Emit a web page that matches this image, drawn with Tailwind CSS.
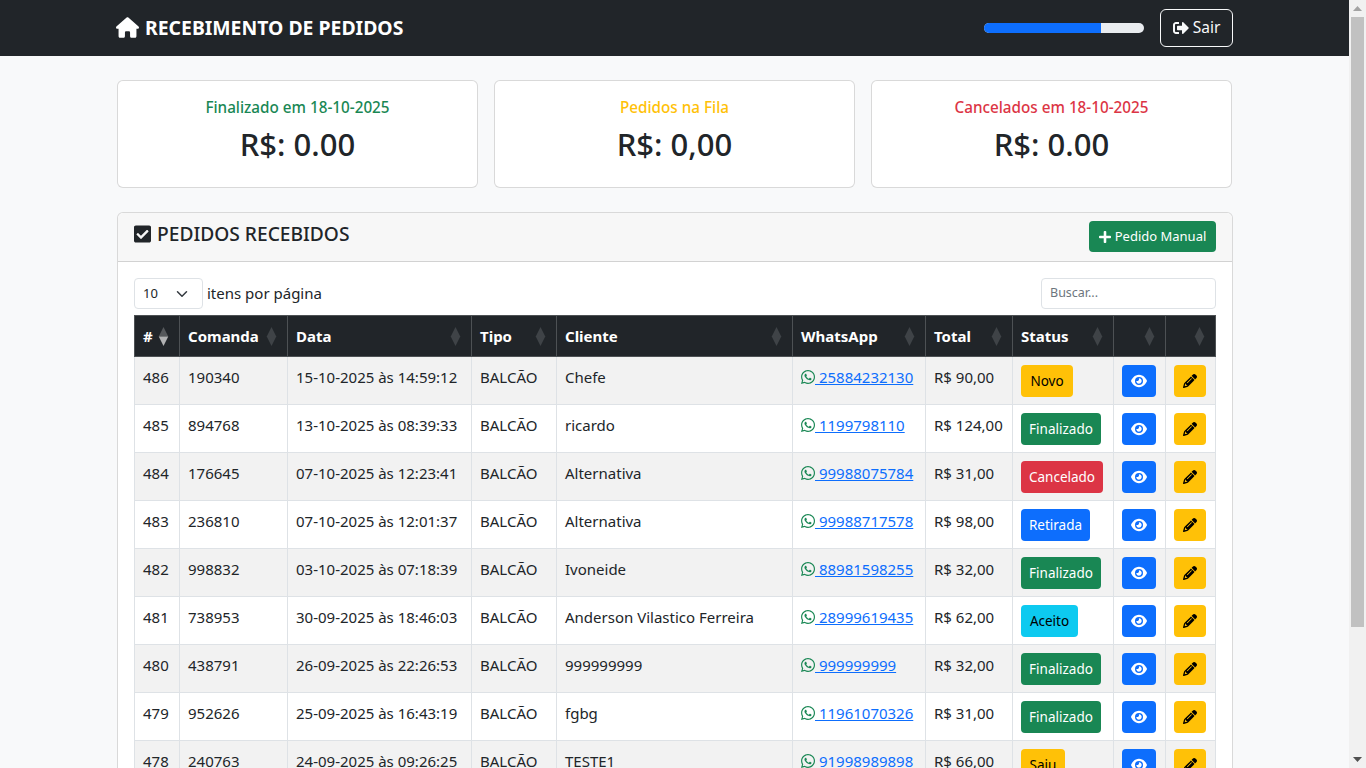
<!DOCTYPE html>
<html lang="pt-BR">
<head>
  <meta charset="UTF-8" />
  <meta name="viewport" content="width=device-width, initial-scale=1.0"/>
  <title>Recebimento de Pedidos</title>
  <script src="https://cdn.jsdelivr.net/npm/@tailwindcss/browser@4"></script>
</head>
<body class="h-screen overflow-hidden flex bg-[#f8f9fa] text-[#212529] font-['Noto_Sans',sans-serif]">

  <!-- icon sprites -->
  <svg class="hidden">
    <symbol id="i-home" viewBox="0 0 576 512"><path fill="currentColor" d="M575.8 255.5c0 18-15 32.1-32 32.1h-32l.7 160.2c0 2.7-.2 5.4-.5 8.1V472c0 22.1-17.9 40-40 40H456c-1.1 0-2.2 0-3.3-.1c-1.4 .1-2.8 .1-4.2 .1H416 392c-22.1 0-40-17.9-40-40V448 384c0-17.7-14.3-32-32-32H256c-17.7 0-32 14.3-32 32v64 24c0 22.1-17.9 40-40 40H160 128.1c-1.5 0-3-.1-4.5-.2c-1.2 .1-2.4 .2-3.6 .2H104c-22.1 0-40-17.9-40-40V360c0-.9 0-1.9 .1-2.8V287.6H32c-18 0-32-14-32-32.1c0-9 3-17 10-24L266.4 8c7-7 15-8 22-8s15 2 21 7L564.8 231.5c8 7 12 15 11 24z"/></symbol>
    <symbol id="i-check" viewBox="0 0 448 512"><path fill="currentColor" d="M400 480H48c-26.51 0-48-21.49-48-48V80c0-26.51 21.49-48 48-48h352c26.51 0 48 21.49 48 48v352c0 26.51-21.49 48-48 48zm-204.686-98.059l184-184c6.248-6.248 6.248-16.379 0-22.627l-22.627-22.627c-6.248-6.248-16.379-6.249-22.628 0L184 302.745l-69.059-69.059c-6.248-6.248-16.379-6.248-22.628 0L69.687 256.313c-6.248 6.248-6.248 16.379 0 22.627l104 104c6.249 6.25 16.379 6.25 22.627.001z"/></symbol>
    <symbol id="i-exit" viewBox="0 0 512 512"><path fill="currentColor" d="M497 273L329 441c-15 15-41 4.5-41-17v-96H152c-13.3 0-24-10.7-24-24v-96c0-13.3 10.7-24 24-24h136V88c0-21.4 25.9-32 41-17l168 168c9.3 9.4 9.3 24.6 0 34zM192 436v-40c0-6.6-5.4-12-12-12H96c-17.7 0-32-14.3-32-32V160c0-17.7 14.3-32 32-32h84c6.6 0 12-5.4 12-12V76c0-6.6-5.4-12-12-12H96c-53 0-96 43-96 96v192c0 53 43 96 96 96h84c6.6 0 12-5.4 12-12z"/></symbol>
    <symbol id="i-plus" viewBox="0 0 448 512"><path fill="currentColor" d="M416 208H272V64c0-17.67-14.33-32-32-32h-32c-17.67 0-32 14.33-32 32v144H32c-17.67 0-32 14.33-32 32v32c0 17.67 14.33 32 32 32h144v144c0 17.67 14.33 32 32 32h32c17.67 0 32-14.33 32-32V304h144c17.67 0 32-14.33 32-32v-32c0-17.67-14.33-32-32-32z"/></symbol>
    <symbol id="i-wa" viewBox="0 0 448 512"><path fill="currentColor" d="M380.9 97.1C339 55.1 283.2 32 223.9 32c-122.4 0-222 99.6-222 222 0 39.1 10.2 77.3 29.6 111L0 480l117.7-30.9c32.4 17.7 68.9 27 106.1 27h.1c122.3 0 224.1-99.6 224.1-222 0-59.3-25.2-115-67.1-157zm-157 341.6c-33.2 0-65.7-8.9-94-25.7l-6.7-4-69.8 18.3L72 359.2l-4.4-7c-18.5-29.4-28.2-63.3-28.2-98.2 0-101.7 82.8-184.5 184.6-184.5 49.3 0 95.6 19.2 130.4 54.1 34.8 34.9 56.2 81.2 56.1 130.5 0 101.8-84.9 184.6-186.6 184.6zm101.2-138.2c-5.5-2.8-32.8-16.2-37.9-18-5.1-1.9-8.8-2.8-12.5 2.8-3.7 5.6-14.3 18-17.6 21.8-3.2 3.7-6.5 4.2-12 1.4-32.6-16.3-54-29.1-75.5-66-5.7-9.8 5.7-9.1 16.3-30.3 1.8-3.7.9-6.9-.5-9.7-1.4-2.8-12.5-30.1-17.1-41.2-4.5-10.8-9.1-9.3-12.5-9.5-3.2-.2-6.9-.2-10.6-.2-3.7 0-9.7 1.4-14.8 6.9-5.1 5.6-19.4 19-19.4 46.3 0 27.3 19.9 53.7 22.6 57.4 2.8 3.7 39.1 59.7 94.8 83.8 35.2 15.2 49 16.5 66.6 13.9 10.7-1.6 32.8-13.4 37.4-26.4 4.6-13 4.6-24.1 3.2-26.4-1.3-2.5-5-3.9-10.5-6.6z"/></symbol>
    <symbol id="i-eye" viewBox="0 0 576 512"><path fill="currentColor" d="M288 32c-80.8 0-145.5 36.8-192.6 80.6C48.6 156 17.3 208 2.5 243.7c-3.3 7.9-3.3 16.7 0 24.6C17.3 304 48.6 356 95.4 399.4C142.5 443.2 207.2 480 288 480s145.5-36.8 192.6-80.6c46.8-43.5 78.1-95.4 93-131.1c3.3-7.9 3.3-16.7 0-24.6c-14.9-35.7-46.2-87.7-93-131.1C433.5 68.8 368.8 32 288 32zM144 256a144 144 0 1 1 288 0 144 144 0 1 1 -288 0zm144-64c0 35.3-28.7 64-64 64c-7.1 0-13.9-1.2-20.3-3.3c-5.5-1.8-11.9 1.6-11.7 7.4c.3 6.9 1.3 13.8 3.2 20.7c13.7 51.2 66.4 81.6 117.6 67.9s81.6-66.4 67.9-117.6c-11.1-41.5-47.8-69.4-88.6-71.1c-5.8-.2-9.2 6.1-7.4 11.7c2.1 6.4 3.3 13.2 3.3 20.3z"/></symbol>
    <symbol id="i-pen" viewBox="0 0 512 512"><path fill="currentColor" d="M410.3 231l11.3-11.3-33.9-33.9-62.1-62.1L291.7 89.8l-11.3 11.3-22.6 22.6L58.6 322.9c-10.4 10.4-18 23.3-22.2 37.4L1 480.7c-2.5 8.4-.2 17.5 6.1 23.7s15.3 8.5 23.7 6.1l120.3-35.4c14.1-4.2 27-11.8 37.4-22.2L387.7 253.7 410.3 231zM160 399.4l-9.1 22.7c-4 3.1-8.5 5.4-13.3 6.9L59.4 452l23-78.1c1.4-4.9 3.8-9.4 6.9-13.3l22.7-9.1v32c0 8.8 7.2 16 16 16h32zM362.7 18.7L348.3 33.2 325.7 55.8 314.3 67.1l33.9 33.9 62.1 62.1 33.9 33.9 11.3-11.3 22.6-22.6 14.5-14.5c25-25 25-65.5 0-90.5L453.3 18.7c-25-25-65.5-25-90.5 0zm-47.4 168l-144 144c-6.2 6.2-16.4 6.2-22.6 0s-6.2-16.4 0-22.6l144-144c6.2-6.2 16.4-6.2 22.6 0s6.2 16.4 0 22.6z"/></symbol>
    <symbol id="i-sort" viewBox="0 0 10 20"><path fill="currentColor" d="M5 0L10 10L5 20L0 10z"/></symbol>
    <symbol id="i-sort-desc" viewBox="0 0 10 20"><path fill="#55585b" d="M5 0L10 10H0z"/><path fill="#b0b1b2" d="M5 20L0 10H10z"/></symbol>
  </svg>

  <div class="w-[1349px] shrink-0 h-full overflow-hidden">
    <!-- Navbar -->
    <nav class="h-14 bg-[#212529] flex items-center justify-between pl-[116px] pr-[116px]">
      <a class="flex items-center gap-[6px] text-white text-[19.4px] font-bold">
        <svg class="w-[23px] h-[21px]"><use href="#i-home"/></svg>
        RECEBIMENTO DE PEDIDOS
      </a>
      <div class="flex items-center gap-4">
        <div class="w-40 h-2.5 rounded-full bg-[#e9ecef] overflow-hidden">
          <div class="h-full w-[73%] bg-[#0d6efd]"></div>
        </div>
        <button class="h-[38px] w-[73px] flex items-center justify-center gap-1 border border-[#f8f9fa] rounded-md text-[#f8f9fa] text-[15.5px]">
          <svg class="w-4 h-4"><use href="#i-exit"/></svg>
          Sair
        </button>
      </div>
    </nav>

    <main class="pl-[117px] pr-[116px] pt-6">
      <!-- Totals -->
      <div class="grid grid-cols-3 gap-4 mb-6 pr-px">
        <div class="h-[108px] bg-white border border-black/15 rounded-md flex flex-col items-center pt-[14px]">
          <h5 class="text-[15.25px] font-medium text-[#198754] leading-6">Finalizado em 18-10-2025</h5>
          <p class="text-[31px] font-medium leading-[38px] mt-[6px]">R$: 0.00</p>
        </div>
        <div class="h-[108px] bg-white border border-black/15 rounded-md flex flex-col items-center pt-[14px]">
          <h5 class="text-[15.25px] font-medium text-[#ffc107] leading-6">Pedidos na Fila</h5>
          <p class="text-[31px] font-medium leading-[38px] mt-[6px]">R$: 0,00</p>
        </div>
        <div class="h-[108px] bg-white border border-black/15 rounded-md flex flex-col items-center pt-[14px]">
          <h5 class="text-[15.25px] font-medium text-[#dc3545] leading-6">Cancelados em 18-10-2025</h5>
          <p class="text-[31px] font-medium leading-[38px] mt-[6px]">R$: 0.00</p>
        </div>
      </div>

      <!-- Pedidos -->
      <section class="bg-white border border-black/15 rounded-md">
        <header class="h-[49px] bg-[#f7f7f7] border-b border-black/15 rounded-t-md flex items-start justify-between px-4 pt-2">
          <h5 class="flex items-center gap-[6px] text-[19.2px] font-medium leading-[26px]">
            <svg class="w-[17px] h-5"><use href="#i-check"/></svg>
            PEDIDOS RECEBIDOS
          </h5>
          <button class="h-[31px] w-[127px] flex items-center justify-center gap-1 bg-[#198754] text-white text-[13px] rounded">
            <svg class="w-3 h-3.5"><use href="#i-plus"/></svg>
            Pedido Manual
          </button>
        </header>

        <div class="px-4 pt-4">
          <div class="flex items-center justify-between h-[31px] mb-[6px]">
            <div class="flex items-center gap-1 text-[15px]">
              <div class="w-[69px] h-[31px] border border-[#dee2e6] rounded flex items-center justify-between pl-2 pr-[14px] text-[13px] text-[#212529]">
                10
                <svg class="w-3 h-3" viewBox="0 0 16 16" fill="none" stroke="#343a40" stroke-width="2" stroke-linecap="round" stroke-linejoin="round"><path d="M2 5l6 6 6-6"/></svg>
              </div>
              itens por página
            </div>
            <div class="w-[175px] h-[31px] border border-[#dee2e6] rounded flex items-center px-2 text-[12.5px] text-[#6c757d]">Buscar...</div>
          </div>

          <table class="w-[1081px] table-fixed border-collapse text-[15px]">
            <colgroup>
              <col class="w-[45px]"><col class="w-[108px]"><col class="w-[184px]"><col class="w-[85px]"><col class="w-[236px]"><col class="w-[133px]"><col class="w-[87px]"><col class="w-[101px]"><col class="w-[52px]"><col class="w-[50px]">
            </colgroup>
            <thead class="bg-[#212529] text-white font-bold">
              <tr class="h-[41px]">
                <th class="border border-[#4d5154] pl-2 pr-[10px] text-left"><div class="flex items-center justify-between"># <svg class="w-[11px] h-[19px]"><use href="#i-sort-desc"/></svg></div></th>
                <th class="border border-[#4d5154] pl-2 pr-[10px] text-left"><div class="flex items-center justify-between">Comanda <svg class="w-[11px] h-[19px] text-[#3f4347]"><use href="#i-sort"/></svg></div></th>
                <th class="border border-[#4d5154] pl-2 pr-[10px] text-left"><div class="flex items-center justify-between">Data <svg class="w-[11px] h-[19px] text-[#3f4347]"><use href="#i-sort"/></svg></div></th>
                <th class="border border-[#4d5154] pl-2 pr-[10px] text-left"><div class="flex items-center justify-between">Tipo <svg class="w-[11px] h-[19px] text-[#3f4347]"><use href="#i-sort"/></svg></div></th>
                <th class="border border-[#4d5154] pl-2 pr-[10px] text-left"><div class="flex items-center justify-between">Cliente <svg class="w-[11px] h-[19px] text-[#3f4347]"><use href="#i-sort"/></svg></div></th>
                <th class="border border-[#4d5154] pl-2 pr-[10px] text-left"><div class="flex items-center justify-between">WhatsApp <svg class="w-[11px] h-[19px] text-[#3f4347]"><use href="#i-sort"/></svg></div></th>
                <th class="border border-[#4d5154] pl-2 pr-[10px] text-left"><div class="flex items-center justify-between">Total <svg class="w-[11px] h-[19px] text-[#3f4347]"><use href="#i-sort"/></svg></div></th>
                <th class="border border-[#4d5154] pl-2 pr-[10px] text-left"><div class="flex items-center justify-between">Status <svg class="w-[11px] h-[19px] text-[#3f4347]"><use href="#i-sort"/></svg></div></th>
                <th class="border border-[#4d5154] pl-2 pr-[10px] text-left"><div class="flex items-center justify-end"><svg class="w-[11px] h-[19px] text-[#3f4347]"><use href="#i-sort"/></svg></div></th>
                <th class="border border-[#4d5154] pl-2 pr-[10px] text-left"><div class="flex items-center justify-end"><svg class="w-[11px] h-[19px] text-[#3f4347]"><use href="#i-sort"/></svg></div></th>
              </tr>
            </thead>
            <tbody class="[&_td]:border [&_td]:border-[#dee2e6] [&_td]:px-2 [&_td]:pt-2 [&_td]:align-top [&_td]:leading-6 [&_td]:whitespace-nowrap [&_tr]:h-12 [&_a]:text-[#0d6efd] [&_a]:underline">
              <tr class="bg-[#f2f2f2]">
                <td>486</td><td>190340</td><td>15-10-2025 às 14:59:12</td><td>BALCÃO</td><td>Chefe</td>
                <td><a href="#"><svg class="inline-block w-3.5 h-4 text-[#198754] align-[-2px]"><use href="#i-wa"/></svg> 25884232130</a></td><td>R$ 90,00</td>
                <td><button class="h-8 w-[52px] rounded bg-[#ffc107] text-black text-[13.5px]">Novo</button></td>
                <td><button class="h-8 w-[34px] rounded bg-[#0d6efd] text-white flex items-center justify-center"><svg class="w-4 h-4"><use href="#i-eye"/></svg></button></td>
                <td><button class="h-8 w-8 rounded bg-[#ffc107] text-black flex items-center justify-center"><svg class="w-3.5 h-3.5"><use href="#i-pen"/></svg></button></td>
              </tr>
              <tr class="bg-white">
                <td>485</td><td>894768</td><td>13-10-2025 às 08:39:33</td><td>BALCÃO</td><td>ricardo</td>
                <td><a href="#"><svg class="inline-block w-3.5 h-4 text-[#198754] align-[-2px]"><use href="#i-wa"/></svg> 1199798110</a></td><td>R$ 124,00</td>
                <td><button class="h-8 w-20 rounded bg-[#198754] text-white text-[13.5px]">Finalizado</button></td>
                <td><button class="h-8 w-[34px] rounded bg-[#0d6efd] text-white flex items-center justify-center"><svg class="w-4 h-4"><use href="#i-eye"/></svg></button></td>
                <td><button class="h-8 w-8 rounded bg-[#ffc107] text-black flex items-center justify-center"><svg class="w-3.5 h-3.5"><use href="#i-pen"/></svg></button></td>
              </tr>
              <tr class="bg-[#f2f2f2]">
                <td>484</td><td>176645</td><td>07-10-2025 às 12:23:41</td><td>BALCÃO</td><td>Alternativa</td>
                <td><a href="#"><svg class="inline-block w-3.5 h-4 text-[#198754] align-[-2px]"><use href="#i-wa"/></svg> 99988075784</a></td><td>R$ 31,00</td>
                <td><button class="h-8 w-[82px] rounded bg-[#dc3545] text-white text-[13.5px]">Cancelado</button></td>
                <td><button class="h-8 w-[34px] rounded bg-[#0d6efd] text-white flex items-center justify-center"><svg class="w-4 h-4"><use href="#i-eye"/></svg></button></td>
                <td><button class="h-8 w-8 rounded bg-[#ffc107] text-black flex items-center justify-center"><svg class="w-3.5 h-3.5"><use href="#i-pen"/></svg></button></td>
              </tr>
              <tr class="bg-white">
                <td>483</td><td>236810</td><td>07-10-2025 às 12:01:37</td><td>BALCÃO</td><td>Alternativa</td>
                <td><a href="#"><svg class="inline-block w-3.5 h-4 text-[#198754] align-[-2px]"><use href="#i-wa"/></svg> 99988717578</a></td><td>R$ 98,00</td>
                <td><button class="h-8 w-[69px] rounded bg-[#0d6efd] text-white text-[13.5px]">Retirada</button></td>
                <td><button class="h-8 w-[34px] rounded bg-[#0d6efd] text-white flex items-center justify-center"><svg class="w-4 h-4"><use href="#i-eye"/></svg></button></td>
                <td><button class="h-8 w-8 rounded bg-[#ffc107] text-black flex items-center justify-center"><svg class="w-3.5 h-3.5"><use href="#i-pen"/></svg></button></td>
              </tr>
              <tr class="bg-[#f2f2f2]">
                <td>482</td><td>998832</td><td>03-10-2025 às 07:18:39</td><td>BALCÃO</td><td>Ivoneide</td>
                <td><a href="#"><svg class="inline-block w-3.5 h-4 text-[#198754] align-[-2px]"><use href="#i-wa"/></svg> 88981598255</a></td><td>R$ 32,00</td>
                <td><button class="h-8 w-20 rounded bg-[#198754] text-white text-[13.5px]">Finalizado</button></td>
                <td><button class="h-8 w-[34px] rounded bg-[#0d6efd] text-white flex items-center justify-center"><svg class="w-4 h-4"><use href="#i-eye"/></svg></button></td>
                <td><button class="h-8 w-8 rounded bg-[#ffc107] text-black flex items-center justify-center"><svg class="w-3.5 h-3.5"><use href="#i-pen"/></svg></button></td>
              </tr>
              <tr class="bg-white">
                <td>481</td><td>738953</td><td>30-09-2025 às 18:46:03</td><td>BALCÃO</td><td>Anderson Vilastico Ferreira</td>
                <td><a href="#"><svg class="inline-block w-3.5 h-4 text-[#198754] align-[-2px]"><use href="#i-wa"/></svg> 28999619435</a></td><td>R$ 62,00</td>
                <td><button class="h-8 w-[57px] rounded bg-[#0dcaf0] text-black text-[13.5px]">Aceito</button></td>
                <td><button class="h-8 w-[34px] rounded bg-[#0d6efd] text-white flex items-center justify-center"><svg class="w-4 h-4"><use href="#i-eye"/></svg></button></td>
                <td><button class="h-8 w-8 rounded bg-[#ffc107] text-black flex items-center justify-center"><svg class="w-3.5 h-3.5"><use href="#i-pen"/></svg></button></td>
              </tr>
              <tr class="bg-[#f2f2f2]">
                <td>480</td><td>438791</td><td>26-09-2025 às 22:26:53</td><td>BALCÃO</td><td>999999999</td>
                <td><a href="#"><svg class="inline-block w-3.5 h-4 text-[#198754] align-[-2px]"><use href="#i-wa"/></svg> 999999999</a></td><td>R$ 32,00</td>
                <td><button class="h-8 w-20 rounded bg-[#198754] text-white text-[13.5px]">Finalizado</button></td>
                <td><button class="h-8 w-[34px] rounded bg-[#0d6efd] text-white flex items-center justify-center"><svg class="w-4 h-4"><use href="#i-eye"/></svg></button></td>
                <td><button class="h-8 w-8 rounded bg-[#ffc107] text-black flex items-center justify-center"><svg class="w-3.5 h-3.5"><use href="#i-pen"/></svg></button></td>
              </tr>
              <tr class="bg-white">
                <td>479</td><td>952626</td><td>25-09-2025 às 16:43:19</td><td>BALCÃO</td><td>fgbg</td>
                <td><a href="#"><svg class="inline-block w-3.5 h-4 text-[#198754] align-[-2px]"><use href="#i-wa"/></svg> 11961070326</a></td><td>R$ 31,00</td>
                <td><button class="h-8 w-20 rounded bg-[#198754] text-white text-[13.5px]">Finalizado</button></td>
                <td><button class="h-8 w-[34px] rounded bg-[#0d6efd] text-white flex items-center justify-center"><svg class="w-4 h-4"><use href="#i-eye"/></svg></button></td>
                <td><button class="h-8 w-8 rounded bg-[#ffc107] text-black flex items-center justify-center"><svg class="w-3.5 h-3.5"><use href="#i-pen"/></svg></button></td>
              </tr>
              <tr class="bg-[#f2f2f2]">
                <td>478</td><td>240763</td><td>24-09-2025 às 09:26:25</td><td>BALCÃO</td><td>TESTE1</td>
                <td><a href="#"><svg class="inline-block w-3.5 h-4 text-[#198754] align-[-2px]"><use href="#i-wa"/></svg> 91998989898</a></td><td>R$ 66,00</td>
                <td><button class="h-8 w-11 rounded bg-[#ffc107] text-black text-[13.5px]">Saiu</button></td>
                <td><button class="h-8 w-[34px] rounded bg-[#0d6efd] text-white flex items-center justify-center"><svg class="w-4 h-4"><use href="#i-eye"/></svg></button></td>
                <td><button class="h-8 w-8 rounded bg-[#ffc107] text-black flex items-center justify-center"><svg class="w-3.5 h-3.5"><use href="#i-pen"/></svg></button></td>
              </tr>
            </tbody>
          </table>
        </div>
      </section>
    </main>
  </div>

  <!-- scrollbar as drawn by the browser in the reference -->
  <div class="w-[17px] h-full bg-[#f1f1f1] flex flex-col items-center">
    <div class="h-[17px] flex items-center justify-center"><svg class="w-[9px] h-[5px]" viewBox="0 0 9 5"><path fill="#a3a3a3" d="M4.5 0L9 5H0z"/></svg></div>
    <div class="w-[13px] h-[610px] bg-[#c1c1c1]"></div>
    <div class="flex-1"></div>
    <div class="h-[17px] flex items-center justify-center"><svg class="w-[9px] h-[5px]" viewBox="0 0 9 5"><path fill="#505050" d="M4.5 5L9 0H0z"/></svg></div>
  </div>
</body>
</html>
